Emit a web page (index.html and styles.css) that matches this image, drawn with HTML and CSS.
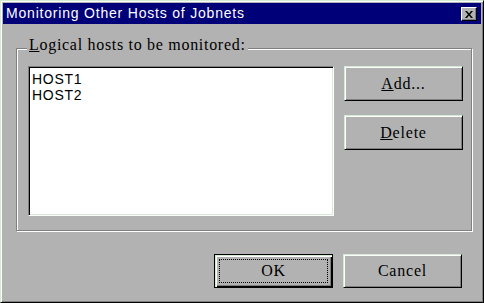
FILE: index.html
```html
<!DOCTYPE html>
<html lang="en">
<head>
    <meta charset="UTF-8">
    <title>Monitoring Other Hosts of Jobnets</title>
    <link rel="stylesheet" href="styles.css">
</head>
<body>
    <div class="window">
        <div class="titlebar">
            <span class="title">Monitoring Other Hosts of Jobnets</span>
            <button class="close-button" aria-label="Close">
                <svg width="8" height="7" viewBox="0 0 8 7">
                    <path d="M0 0h2l2 2.5L6 0h2L5 3.5 8 7H6L4 4.5 2 7H0l3-3.5z" fill="#000"/>
                </svg>
            </button>
        </div>
        <div class="client">
            <div class="group">
                <span class="group-label"><u>L</u>ogical hosts to be monitored:</span>
                <div class="listbox">
                    <div class="list-item">HOST1</div>
                    <div class="list-item">HOST2</div>
                </div>
                <div class="side-buttons">
                    <button class="button"><u>A</u>dd...</button>
                    <button class="button"><u>D</u>elete</button>
                </div>
            </div>
            <div class="dialog-buttons">
                <button class="button default"><span class="focus">OK</span></button>
                <button class="button">Cancel</button>
            </div>
        </div>
    </div>
</body>
</html>
```

FILE: styles.css
```css
body {
    margin: 0;
    background-color: #b2b2b2;
}

.window {
    width: 484px;
    height: 303px;
    box-sizing: border-box;
    background-color: #b2b2b2;
    border: 1px solid;
    border-color: #d4ecd4 #000 #000 #d4ecd4;
    box-shadow: inset 1px 1px 0 #fff, inset -1px -1px 0 #808080;
    padding: 2px 2px 2px 2px;
}

.titlebar {
    display: flex;
    align-items: center;
    justify-content: space-between;
    height: 21px;
    background-color: #000078;
    padding: 0 4px 0 3px;
}

.title {
    font-family: 'Liberation Sans', Arial, sans-serif;
    font-size: 14px;
    letter-spacing: 0.8px;
    line-height: 21px;
    color: #fff;
    white-space: nowrap;
}

.close-button {
    display: flex;
    align-items: center;
    justify-content: center;
    width: 16px;
    height: 14px;
    padding: 0;
    margin-top: 1px;
    background-color: #b2b2b2;
    border: 1px solid;
    border-color: #fff #000 #000 #fff;
    box-shadow: inset -1px -1px 0 #808080;
}

.client {
    padding: 24px 0 0 13px;
}

.group {
    position: relative;
    display: flex;
    align-items: flex-start;
    width: 456px;
    height: 183px;
    box-sizing: border-box;
    padding: 17px 0 0 11px;
    border: 1px solid #808080;
    box-shadow: inset 1px 1px 0 #fff, 1px 1px 0 #fff;
}

.group-label {
    position: absolute;
    top: -13px;
    left: 10px;
    padding: 0 2px;
    background-color: #b2b2b2;
    font-family: 'Liberation Serif', 'Times New Roman', serif;
    font-size: 16px;
    line-height: 17px;
    letter-spacing: 0.7px;
    color: #000;
}

.listbox {
    width: 306px;
    height: 150px;
    box-sizing: border-box;
    background-color: #fff;
    border: 1px solid;
    border-color: #808080 #fff #fff #808080;
    box-shadow: inset 1px 1px 0 #000, inset -1px -1px 0 #d4ecd4;
    padding: 4px 3px;
}

.list-item {
    font-family: 'Liberation Sans', Arial, sans-serif;
    font-size: 14px;
    letter-spacing: 0.7px;
    line-height: 16px;
    color: #000;
}

.side-buttons {
    display: flex;
    flex-direction: column;
    gap: 14px;
    margin-left: 10px;
}

.button {
    width: 119px;
    height: 35px;
    padding: 0;
    background-color: #b2b2b2;
    border: 1px solid;
    border-color: #d4ecd4 #000 #000 #d4ecd4;
    box-shadow: inset 1px 1px 0 #fff, inset -1px -1px 0 #808080;
    font-family: 'Liberation Serif', 'Times New Roman', serif;
    font-size: 16px;
    letter-spacing: 0.8px;
    color: #000;
}

.dialog-buttons {
    display: flex;
    justify-content: flex-end;
    gap: 10px;
    margin-top: 23px;
    padding-right: 19px;
}

.dialog-buttons .button {
    height: 34px;
}

.button.default {
    border-color: #000;
    box-shadow: inset 1px 1px 0 #d4ecd4, inset 2px 2px 0 #fff, inset -1px -1px 0 #000, inset -2px -2px 0 #808080;
    padding: 4px;
}

.focus {
    display: flex;
    align-items: center;
    justify-content: center;
    height: 100%;
    border: 1px dotted #000;
    box-sizing: border-box;
}
```
